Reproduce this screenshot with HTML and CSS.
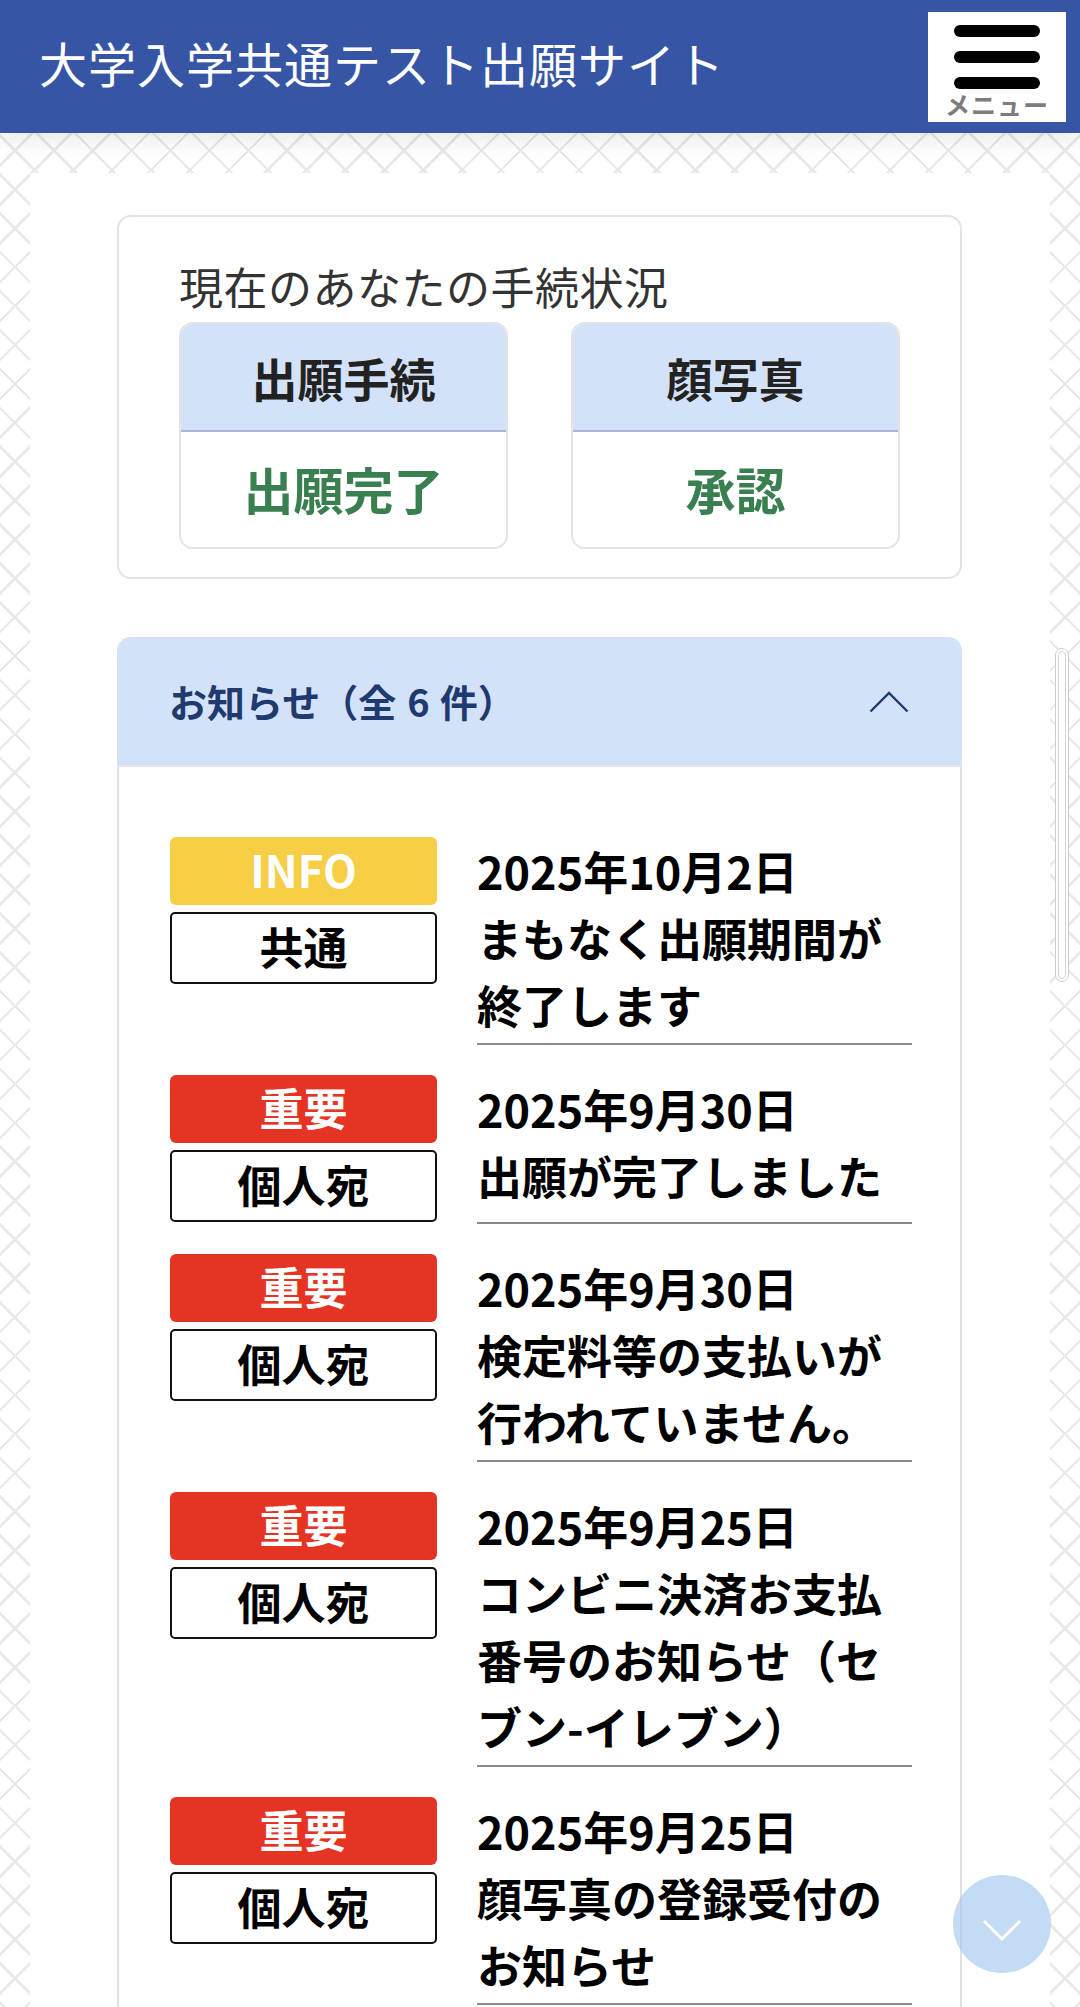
FILE: index.html
```html
<!DOCTYPE html>
<html lang="ja">
<head>
<meta charset="utf-8">
<title>大学入学共通テスト出願サイト</title>
<link rel="stylesheet" href="styles.css">
</head>
<body>
<header class="site-header">
  <h1 class="site-title">大学入学共通テスト出願サイト</h1>
  <button class="menu-btn" type="button">
    <span class="bar"></span>
    <span class="bar"></span>
    <span class="bar"></span>
    <span class="menu-label">メニュー</span>
  </button>
</header>

<main class="page">
  <section class="status-card">
    <h2 class="status-title">現在のあなたの手続状況</h2>
    <div class="status-grid">
      <div class="status-box">
        <div class="status-head">出願手続</div>
        <div class="status-value">出願完了</div>
      </div>
      <div class="status-box">
        <div class="status-head">顔写真</div>
        <div class="status-value">承認</div>
      </div>
    </div>
  </section>

  <section class="notice-card">
    <div class="notice-head">
      <h2 class="notice-title">お知らせ（全<span class="count">6</span>件）</h2>
      <svg class="chev-up" width="40" height="22" viewBox="0 0 40 22" aria-hidden="true"><polyline points="1.5,20.5 20,2 38.5,20.5" fill="none" stroke="#1f3a6e" stroke-width="2.4"/></svg>
    </div>
    <ul class="notice-list">
      <li class="notice">
        <div class="tags"><span class="tag tag-info">INFO</span><span class="tag tag-scope">共通</span></div>
        <div class="notice-text"><p class="line">2025年10月2日</p><p class="line">まもなく出願期間が終了します</p></div>
      </li>
      <li class="notice">
        <div class="tags"><span class="tag tag-important">重要</span><span class="tag tag-scope">個人宛</span></div>
        <div class="notice-text"><p class="line">2025年9月30日</p><p class="line">出願が完了しました</p></div>
      </li>
      <li class="notice">
        <div class="tags"><span class="tag tag-important">重要</span><span class="tag tag-scope">個人宛</span></div>
        <div class="notice-text"><p class="line">2025年9月30日</p><p class="line">検定料等の支払いが行われていません。</p></div>
      </li>
      <li class="notice">
        <div class="tags"><span class="tag tag-important">重要</span><span class="tag tag-scope">個人宛</span></div>
        <div class="notice-text"><p class="line">2025年9月25日</p><p class="line">コンビニ決済お支払番号のお知らせ（セブン-イレブン）</p></div>
      </li>
      <li class="notice">
        <div class="tags"><span class="tag tag-important">重要</span><span class="tag tag-scope">個人宛</span></div>
        <div class="notice-text"><p class="line">2025年9月25日</p><p class="line">顔写真の登録受付のお知らせ</p></div>
      </li>
    </ul>
  </section>
</main>

<div class="scroll-indicator"><span class="scroll-inner"></span></div>

<button class="to-bottom" type="button" aria-label="下へ">
  <svg width="40" height="22" viewBox="0 0 40 22" aria-hidden="true"><polyline points="2,2 20,20 38,2" fill="none" stroke="#ffffff" stroke-width="3"/></svg>
</button>
</body>
</html>
```

FILE: styles.css
```css
* { box-sizing: border-box; }

html, body { margin: 0; padding: 0; }

body {
  font-family: "Noto Sans CJK JP", "Noto Sans", sans-serif;
  color: #000;
  background-color: #fff;
  background-image:
    repeating-linear-gradient(45deg, transparent 0 25px, #e9e9e9 25px 27.5px),
    repeating-linear-gradient(-45deg, transparent 0 25px, #e9e9e9 25px 27.5px);
  min-height: 2007px;
}

/* header */
.site-header {
  height: 133px;
  background: #3755a5;
  display: flex;
  align-items: center;
  justify-content: space-between;
  padding: 0 14px 0 39px;
  box-shadow: 0 3px 26px rgba(0, 0, 0, 0.12);
  position: relative;
  z-index: 2;
}

.site-title {
  margin: 0 0 10px;
  color: #fff;
  font-size: 48px;
  font-weight: 400;
  line-height: 1;
  letter-spacing: 1px;
}

.menu-btn {
  width: 138px;
  height: 110px;
  background: #fff;
  border: none;
  padding: 13px 0 0;
  display: flex;
  flex-direction: column;
  align-items: center;
  gap: 14px;
  font-family: inherit;
}

.bar {
  display: block;
  width: 86px;
  height: 12px;
  border-radius: 6px;
  background: #000;
}

.menu-label {
  margin-top: -11px;
  font-size: 25px;
  line-height: 24px;
  font-weight: 700;
  color: #7d7d7d;
  letter-spacing: 1px;
}

/* page container */
.page {
  margin: 40px 30px 0;
  background: #fff;
  padding: 42px 88px 120px 87px;
}

/* status card */
.status-card {
  border: 2px solid #e3e3e3;
  border-radius: 14px;
  padding: 41px 60px 28px;
  background: #fff;
}

.status-title {
  margin: 0 0 8px;
  font-size: 44px;
  line-height: 56px;
  font-weight: 400;
  color: #333;
  letter-spacing: 0.5px;
}

.status-grid {
  display: grid;
  grid-template-columns: 1fr 1fr;
  column-gap: 63px;
}

.status-box {
  border: 2px solid #e4e4e4;
  border-radius: 14px;
  overflow: hidden;
  text-align: center;
}

.status-head {
  height: 108px;
  background: #d3e2f9;
  border-bottom: 2px solid #aab6d3;
  font-size: 46px;
  font-weight: 700;
  color: #222;
  line-height: 106px;
}

.status-value {
  height: 115px;
  line-height: 112px;
  font-size: 50px;
  font-weight: 700;
  color: #3a7f4f;
}

/* notices */
.notice-card {
  margin-top: 58px;
  border-radius: 14px 14px 0 0;
}

.notice-head {
  height: 130px;
  background: #d3e2f9;
  border-radius: 14px 14px 0 0;
  border-bottom: 2px solid #e2e5ea;
  display: flex;
  align-items: center;
  justify-content: space-between;
  padding: 0 53px 0 52px;
}

.notice-title {
  margin: 0;
  font-size: 38px;
  font-weight: 700;
  color: #1f3a6e;
  line-height: 1;
}

.count {
  display: inline-block;
  padding: 0 10px 0 11px;
}

.chev-up { display: block; margin-top: 2px; }

.notice-list {
  list-style: none;
  margin: 0;
  padding: 70px 48px 40px 51px;
  border-left: 2px solid #e0e0e0;
  border-right: 2px solid #e0e0e0;
  background: #fff;
}

.notice {
  display: flex;
  gap: 40px;
  margin-bottom: 30px;
}

.tags {
  flex: 0 0 267px;
  display: flex;
  flex-direction: column;
  gap: 7px;
  padding-bottom: 2px;
}

.tag {
  display: block;
  text-align: center;
  font-size: 44px;
  font-weight: 700;
  border-radius: 6px;
}

.tag-info {
  height: 68px;
  line-height: 64px;
  background: #f6cf47;
  color: #fff;
}

.tag-important {
  height: 68px;
  line-height: 64px;
  background: #e63424;
  color: #fff;
}

.tag-scope {
  height: 72px;
  line-height: 64px;
  border: 2px solid #111;
  border-radius: 5px;
  color: #000;
  background: #fff;
}

.notice-text {
  flex: 1;
  border-bottom: 2px solid #8a8a8a;
  padding-bottom: 5px;
  font-size: 45px;
  line-height: 67px;
  font-weight: 700;
  color: #000;
}

.line { margin: 0; }

/* overlays */
.scroll-indicator {
  position: fixed;
  left: 1055px;
  top: 648px;
  width: 14px;
  height: 334px;
  border: 1px solid #cdcdcd;
  border-radius: 7px;
  padding: 2px;
  background: #fff;
}

.scroll-inner {
  display: block;
  height: 100%;
  border: 1px solid #d4d4d4;
  border-radius: 5px;
}

.to-bottom {
  position: fixed;
  left: 953px;
  top: 1875px;
  width: 98px;
  height: 98px;
  border-radius: 50%;
  border: none;
  padding: 12px 0 0;
  background: rgba(160, 197, 238, 0.62);
  display: flex;
  align-items: center;
  justify-content: center;
}
```
